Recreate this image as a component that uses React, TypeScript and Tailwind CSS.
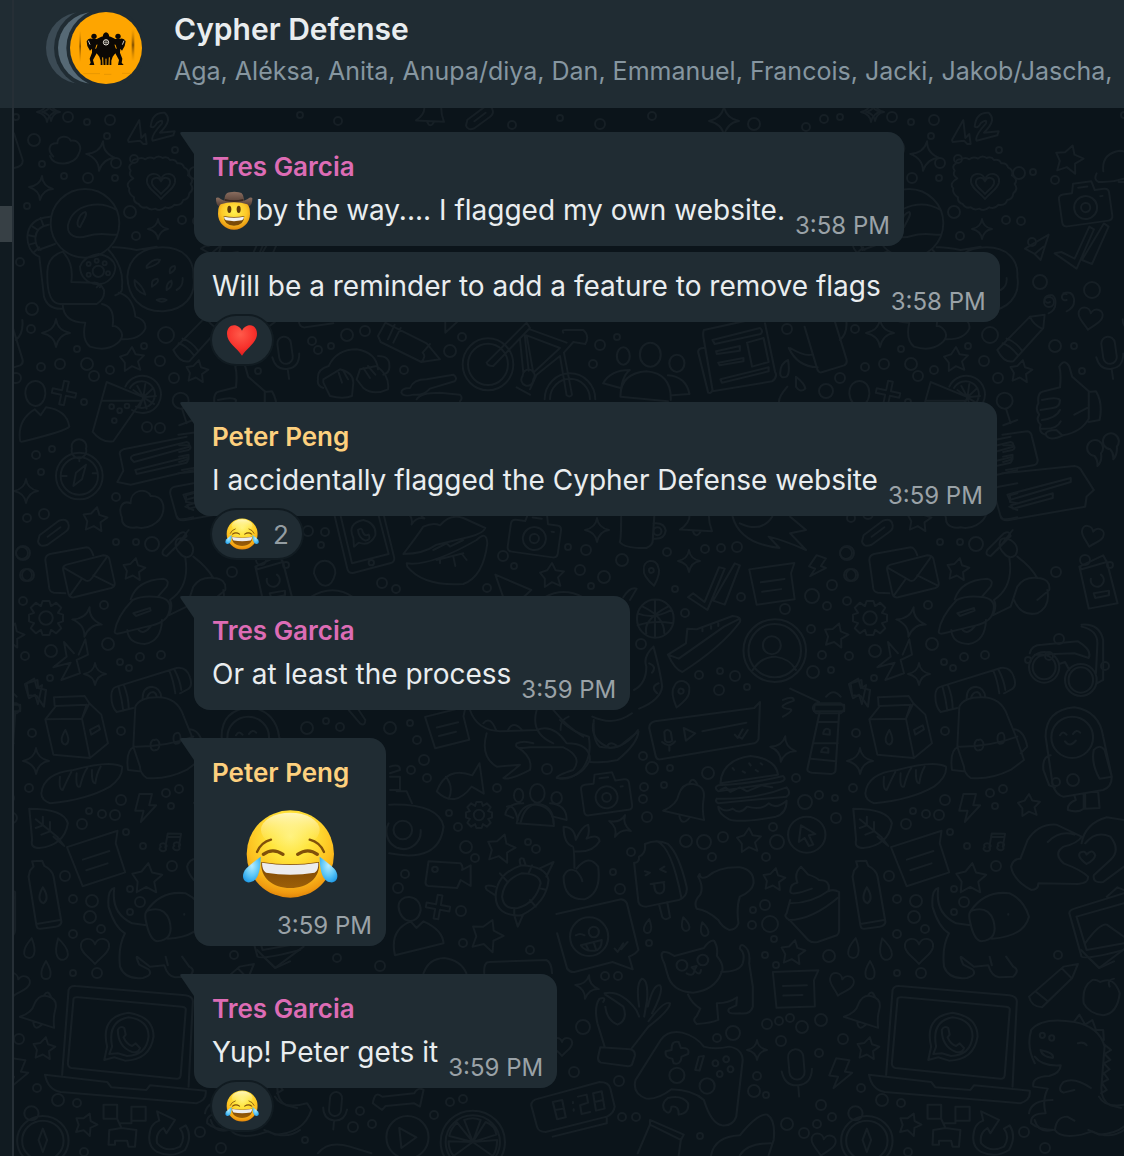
import React, { useId } from "react";

/* ---------- emoji ---------- */

function JoyEmoji({ className }: { className: string }) {
  const id = useId();
  return (
    <svg className={className} viewBox="186 228 288 288" role="img" aria-label="face with tears of joy">
      <defs>
        <radialGradient id={id + "f"} cx="0.5" cy="0.3" r="0.72">
          <stop offset="0" stopColor="#fff27a" />
          <stop offset="0.35" stopColor="#ffe43a" />
          <stop offset="0.7" stopColor="#fdbf1e" />
          <stop offset="0.9" stopColor="#f09a10" />
          <stop offset="1" stopColor="#d97d08" />
        </radialGradient>
        <linearGradient id={id + "h"} x1="0" y1="0" x2="0" y2="1">
          <stop offset="0" stopColor="#fffbe0" stopOpacity="0.8" />
          <stop offset="1" stopColor="#ffef70" stopOpacity="0" />
        </linearGradient>
        <linearGradient id={id + "m"} x1="0" y1="0" x2="0" y2="1">
          <stop offset="0" stopColor="#7a4505" />
          <stop offset="1" stopColor="#9c5f08" />
        </linearGradient>
        <radialGradient id={id + "t"} cx="0.5" cy="0.35" r="0.7">
          <stop offset="0" stopColor="#b6ecff" />
          <stop offset="0.55" stopColor="#5fc8f8" />
          <stop offset="1" stopColor="#1f9be8" />
        </radialGradient>
      </defs>
      <circle cx="331" cy="372" r="131" fill={`url(#${id}f)`} />
      <ellipse cx="331" cy="300" rx="88" ry="52" fill={`url(#${id}h)`} />
      <g fill="none" stroke="#80500a" strokeLinecap="round">
        <path d="M231 366Q243 337 273 329" strokeWidth="7" />
        <path d="M432 366Q420 337 389 329" strokeWidth="7" />
        <path d="M250 373Q278 352 309 373" strokeWidth="10" />
        <path d="M353 373Q384 352 412 373" strokeWidth="10" />
      </g>
      <path d="M244 396Q331 410 417 396C422 444 383 474 331 474C279 474 240 444 244 396Z" fill={`url(#${id}m)`} />
      <path d="M246 398Q331 412 415 398Q416 422 404 428Q331 440 258 428Q246 421 246 398Z" fill="#ececee" />
      <path d="M242 380Q242 452 210 457C188 460 182 434 198 416Q212 402 242 380Z" fill={`url(#${id}t)`} />
      <path d="M419 380Q419 452 451 457C473 460 479 434 463 416Q449 402 419 380Z" fill={`url(#${id}t)`} />
    </svg>
  );
}

function CowboyEmoji({ className }: { className: string }) {
  const id = useId();
  return (
    <svg className={className} viewBox="132 200 120 120" role="img" aria-label="cowboy hat face">
      <defs>
        <radialGradient id={id + "f"} cx="0.5" cy="0.35" r="0.65">
          <stop offset="0" stopColor="#fff04f" />
          <stop offset="0.6" stopColor="#fdc928" />
          <stop offset="1" stopColor="#e28a0c" />
        </radialGradient>
        <linearGradient id={id + "b"} x1="0" y1="0" x2="0" y2="1">
          <stop offset="0" stopColor="#8a6e60" />
          <stop offset="1" stopColor="#4c372e" />
        </linearGradient>
      </defs>
      <path d="M164 243Q160 207 180 207Q193 203 206 207Q226 208 221 243Z" fill={`url(#${id}b)`} />
      <path d="M165 227Q192 235 220 227V237Q192 243 164 237Z" fill="#3b2a22" />
      <path d="M138 224Q144 220 152 227Q165 236 192 236Q220 236 233 227Q242 220 247 224Q248 246 234 251H150Q137 246 138 224Z" fill={`url(#${id}b)`} />
      <path d="M144 271Q144 250 152 243Q170 237 192 237Q214 237 232 243Q240 250 240 271A48 48 0 0 1 144 271Z" fill={`url(#${id}f)`} />
      <ellipse cx="178" cy="258" rx="6" ry="11" fill="#5f3a08" />
      <ellipse cx="206" cy="258" rx="6" ry="11" fill="#5f3a08" />
      <path d="M161 278Q192 284 223 278Q222 307 192 307Q162 307 161 278Z" fill="#7a4a08" />
      <path d="M162 280Q192 286 222 280Q221 290 216 291Q192 296 168 291Q163 290 162 280Z" fill="#f2f2f2" />
    </svg>
  );
}

function HeartEmoji({ className }: { className: string }) {
  const id = useId();
  return (
    <svg className={className} viewBox="165 609 102 102" role="img" aria-label="red heart">
      <defs>
        <radialGradient id={id} cx="0.45" cy="0.3" r="0.75">
          <stop offset="0" stopColor="#ff5a4a" />
          <stop offset="0.6" stopColor="#f8322c" />
          <stop offset="1" stopColor="#d81a1c" />
        </radialGradient>
      </defs>
      <path
        d="M216 632C222 620 232 616 240 616C252 616 261 626 261 641C261 668 230 684 216 707C202 684 171 668 171 641C171 626 180 616 192 616C200 616 210 620 216 632Z"
        fill={`url(#${id})`}
      />
    </svg>
  );
}

/* ---------- group avatar ---------- */

function GroupAvatar() {
  return (
    <svg className="h-[72px] w-24 shrink-0" viewBox="138 36 288 216" role="img" aria-label="Cypher Defense group">
      <defs>
        <linearGradient id="av-shade" x1="0" y1="0" x2="0" y2="1">
          <stop offset="0" stopColor="#c07800" stopOpacity="0" />
          <stop offset="0.5" stopColor="#7c4c00" stopOpacity="0.9" />
          <stop offset="1" stopColor="#c07800" stopOpacity="0" />
        </linearGradient>
      </defs>
      <circle cx="246" cy="144" r="108" fill="#3b4a54" />
      <circle cx="282" cy="144" r="120" fill="#202c33" />
      <circle cx="282" cy="144" r="108" fill="#566975" />
      <circle cx="318" cy="144" r="119" fill="#202c33" />
      <circle cx="318" cy="144" r="108" fill="#fea500" />
      <rect x="238" y="92" width="5" height="94" fill="url(#av-shade)" />
      <rect x="395" y="86" width="8" height="98" fill="url(#av-shade)" />
      <path d="M250 221H300M312 223H334M366 220H392" stroke="#e99700" strokeWidth="3" />
      <g fill="#0b0805">
        <circle cx="282" cy="109" r="8" />
        <circle cx="354" cy="109" r="8" />
        <path d="M308 110Q310 98 318 97Q326 98 328 110L334 122H302Z" />
        <path d="M260 124Q264 114 274 116L290 117L304 110L318 108L332 110L346 117L362 116Q372 114 377 124L374 138L366 152L361 146L360 158L367 176L365 188L371 195H354L357 180L346 160L338 170L334 182L334 195H302L302 182L298 170L290 160L279 180L283 195H268L272 188L269 176L276 158L276 146L270 152L262 138Z" />
      </g>
      <path d="M309 195L308 172M327 195L328 172M318 176V195" stroke="#fea500" strokeWidth="3" />
      <path d="M287 146L291 134M349 146L345 134" stroke="#fea500" strokeWidth="3" />
      <circle cx="318" cy="127" r="8" fill="none" stroke="#e8e4da" strokeWidth="3" />
      <path d="M318 120V134M311 127H325" stroke="#cfcac0" strokeWidth="2" />
      <path d="M265 122L270 134M372 122L367 134" stroke="#cfcac0" strokeWidth="3" />
    </svg>
  );
}

/* ---------- wallpaper ---------- */

const shapes: Record<string, string> = {
  star: "M0 -10L3 -4L10 -3L5 2L7 9L0 6L-6 10L-6 3L-10 -2L-4 -4Z",
  sparkle: "M0 -10Q1 -2 10 0Q2 1 0 10Q-1 2 -10 0Q-1 -2 0 -10Z",
  heart: "M0 -4C2 -10 11 -9 10 -2C9 3 4 5 0 10C-4 5 -9 3 -10 -2C-11 -9 -2 -10 0 -4Z",
  drop: "M0 -10Q6 0 5 5A5 5 0 0 1 -5 5Q-6 0 0 -10Z",
  bolt: "M-4 -10H5L3 -2H8L-3 10L-1 2H-7Z",
  plus: "M-2 -10H2V-2H10V2H2V10H-2V2H-10V-2H-2Z",
  gear: "M-2 -10H2L3 -7L6 -9L9 -6L7 -3L10 -2V2L7 3L9 6L6 9L3 7L2 10H-2L-3 7L-6 9L-9 6L-7 3L-10 2V-2L-7 -3L-9 -6L-6 -9L-3 -7ZM4 0A4 4 0 1 1 -4 0A4 4 0 1 1 4 0",
  bell: "M-10 6Q-4 2 -4 -3Q-3 -9 2 -9Q8 -9 8 -3Q8 2 10 7ZM-2 7Q0 12 3 7M0 -9Q1 -13 4 -9",
  mic: "M-4 -8A4 4 0 0 1 4 -8V0A4 4 0 0 1 -4 0ZM-8 -1Q-7 7 0 7Q7 7 8 -1M0 7V13",
  pin: "M0 10Q-8 0 -6 -5A6 6 0 0 1 6 -5Q8 0 0 10ZM2 -3A2 2 0 1 1 -2 -3A2 2 0 1 1 2 -3",
  clip: "M-9 2L3 -7Q8 -9 9 -5Q10 -2 7 0L-4 8Q-9 10 -10 6ZM-4 3L4 -3",
  camera: "M-9 -5H-5L-4 -9H4L5 -5H9Q11 -5 11 -3V7Q11 9 9 9H-9Q-11 9 -11 7V-3Q-11 -5 -9 -5ZM5 2A5 5 0 1 1 -5 2A5 5 0 1 1 5 2M2 2A2 2 0 1 1 -2 2A2 2 0 1 1 2 2M-2 -7H2M7 -2H8",
  note: "M-9 -7H10L8 -3V8H-8ZM-5 -1H5M-5 3H3",
  fish: "M-10 2Q-4 -9 7 -3L11 -8V6L6 2Q-3 11 -10 2M-5 -4Q-2 1 -5 6",
  music: "M-5 7V-6L7 -8V4M-5 7A3 2 0 1 1 -9 7A3 2 0 1 1 -5 7M7 4A3 2 0 1 1 3 4A3 2 0 1 1 7 4M-5 -3L7 -5",
};

// [shape, x, y, half size, rotation]
const items: [string, number, number, number, number][] = [
  ["sparkle", 101, 156, 15, 8], ["sparkle", 41, 188, 12, 5], ["sparkle", 158, 229, 10, 0], ["sparkle", 56, 333, 14, 0],
  ["star", 132, 359, 12, 0], ["star", 197, 371, 11, 10], ["plus", 64, 393, 12, 12], ["sparkle", 47, 112, 10, 0],
  ["heart", 161, 185, 14, 0], ["heart", 161, 185, 9, 0],
  ["sparkle", 26, 491, 12, 0], ["star", 95, 519, 12, 10], ["clip", 54, 532, 16, 0], ["star", 134, 569, 11, 10],
  ["gear", 46, 618, 17, 0], ["sparkle", 87, 622, 15, 10], ["sparkle", 95, 674, 11, 0], ["bolt", 35, 692, 12, -30],
  ["sparkle", 36, 761, 13, 0], ["bolt", 145, 808, 14, 0], ["star", 205, 805, 11, 0],
  ["music", 172, 841, 11, 10], ["star", 147, 878, 15, 5], ["note", 97, 858, 28, -18],
  ["drop", 30, 948, 10, 10], ["drop", 61, 949, 11, -15], ["drop", 46, 970, 9, 0], ["heart", 95, 950, 14, 0],
  ["bell", 40, 1011, 18, 15], ["star", 44, 1048, 11, 10], ["star", 86, 1124, 11, 20],
  ["sparkle", 724, 121, 15, 0], ["star", 245, 159, 14, 15], ["camera", 261, 203, 23, -8],
  ["heart", 266, 318, 12, 10], ["mic", 286, 357, 17, -8],
  ["sparkle", 597, 530, 12, 0], ["bell", 696, 520, 16, 0],
  ["pin", 652, 574, 12, -10], ["sparkle", 689, 561, 11, 0], ["bolt", 817, 567, 11, 20],
  ["note", 773, 583, 24, -8], ["star", 836, 635, 12, 15], ["pin", 680, 695, 13, 15],
  ["sparkle", 783, 749, 13, 10], ["sparkle", 620, 826, 12, 25], ["bell", 686, 802, 21, 10], ["star", 749, 840, 12, 0],
  ["star", 774, 879, 11, 10], ["star", 793, 952, 12, 10], ["sparkle", 587, 987, 12, 10],
  ["camera", 606, 793, 22, -8], ["drop", 648, 926, 7, 10], ["drop", 685, 924, 7, -15], ["drop", 704, 929, 7, -15],
  ["note", 795, 988, 24, -2], ["heart", 841, 984, 12, 15], ["sparkle", 757, 1050, 10, 0], ["mic", 797, 1072, 19, -5],
  ["bolt", 840, 1074, 15, 8], ["heart", 823, 1144, 12, 10], ["star", 552, 575, 12, 0], ["camera", 535, 534, 23, 8],
  ["gear", 479, 815, 13, 0], ["fish", 458, 784, 22, -8], ["note", 448, 727, 22, -14],
  ["star", 501, 848, 14, 15], ["star", 487, 935, 16, 20], ["plus", 438, 907, 12, 10], ["mic", 335, 1110, 15, 5],
  ["sparkle", 415, 515, 10, 20], ["heart", 268, 536, 11, 15],
  ["heart", 562, 1046, 10, 0], ["clip", 480, 117, 14, 0], ["sparkle", 875, 112, 9, 0], ["bell", 430, 112, 14, 0],
];

// [x, y, radius]
const dots: [number, number, number][] = [
  [68, 117, 5], [87, 122, 3], [110, 120, 5], [34, 140, 6], [107, 136, 3], [42, 164, 3], [116, 163, 5], [134, 159, 4],
  [64, 176, 3], [88, 178, 5], [115, 178, 3], [175, 150, 3], [27, 206, 3], [130, 212, 6], [136, 236, 4], [182, 220, 4],
  [20, 262, 4], [32, 309, 6], [31, 329, 4], [77, 349, 3], [41, 367, 4], [60, 364, 5], [87, 364, 6], [110, 370, 4],
  [94, 376, 5], [144, 346, 3], [166, 335, 8], [160, 361, 5], [174, 378, 5], [84, 402, 3], [147, 427, 5], [160, 428, 5],
  [36, 455, 4], [52, 449, 3], [41, 472, 3], [27, 518, 4], [44, 514, 5], [116, 497, 4], [22, 553, 6], [26, 575, 6],
  [116, 542, 3], [136, 542, 3], [152, 544, 7], [23, 601, 4], [104, 605, 4], [51, 651, 6], [108, 644, 6], [25, 656, 4],
  [120, 662, 3], [140, 657, 4], [161, 655, 4], [129, 668, 3], [50, 678, 3], [121, 731, 4], [32, 733, 4], [29, 788, 4],
  [121, 800, 5], [166, 793, 4], [179, 789, 4], [89, 811, 3], [102, 814, 4], [115, 815, 5], [82, 824, 5], [126, 832, 3],
  [171, 806, 3], [143, 846, 3], [65, 876, 5], [73, 899, 4], [92, 901, 6], [90, 917, 6], [101, 929, 4], [73, 934, 4],
  [140, 902, 5], [130, 912, 3], [130, 889, 3], [172, 866, 5], [97, 973, 5], [73, 973, 3], [37, 1088, 4], [58, 1100, 6],
  [77, 1103, 4], [754, 124, 6], [806, 127, 4], [824, 119, 4], [840, 117, 3], [312, 341, 4], [318, 350, 4], [331, 346, 3],
  [347, 335, 6], [365, 331, 5], [404, 370, 4], [450, 351, 6], [462, 337, 4], [258, 371, 3], [216, 282, 7], [208, 242, 4],
  [197, 221, 4], [195, 173, 6], [209, 172, 3], [231, 180, 4], [268, 290, 8], [231, 346, 6], [250, 346, 3], [225, 302, 5],
  [593, 364, 4], [600, 345, 5], [617, 337, 3], [787, 329, 5], [826, 391, 7], [840, 378, 5], [580, 570, 5], [586, 550, 5],
  [622, 560, 6], [667, 552, 4], [705, 549, 4], [721, 548, 4], [737, 547, 5], [675, 589, 3], [604, 577, 6],
  [591, 586, 3], [847, 553, 7], [832, 585, 5], [812, 596, 7], [741, 597, 4], [852, 575, 6], [827, 606, 4], [785, 609, 5],
  [685, 613, 4], [811, 629, 4], [641, 644, 5], [822, 655, 4], [813, 672, 6], [831, 670, 3], [719, 690, 5], [735, 676, 5],
  [720, 671, 3], [699, 675, 4], [747, 687, 3], [652, 768, 6], [670, 768, 3], [643, 756, 4], [644, 787, 4], [643, 799, 4],
  [647, 817, 5], [664, 785, 3], [708, 773, 6], [796, 778, 4], [805, 802, 7], [819, 795, 4], [835, 798, 3], [836, 818, 5],
  [686, 841, 6], [704, 842, 7], [723, 837, 5], [777, 842, 7], [773, 827, 4], [766, 857, 4], [712, 857, 4], [631, 852, 4],
  [620, 889, 5], [613, 872, 3], [770, 924, 8], [765, 905, 5], [752, 925, 4], [753, 910, 3], [774, 939, 3], [829, 956, 6],
  [765, 955, 3], [776, 965, 3], [649, 943, 3], [583, 1027, 7], [574, 1072, 5], [619, 1081, 5], [605, 976, 4], [618, 976, 4],
  [733, 1033, 7], [717, 1038, 4], [767, 1024, 5], [779, 1021, 4], [790, 1018, 4], [802, 1027, 6], [821, 1020, 6],
  [781, 1041, 5], [819, 1053, 4], [843, 1039, 5], [754, 1091, 6], [757, 1076, 4], [766, 1095, 3], [821, 1105, 5],
  [832, 1117, 4], [787, 1124, 6], [804, 1133, 5], [817, 1124, 4], [622, 1117, 4], [636, 1117, 4], [700, 1136, 3],
  [308, 531, 5], [325, 532, 4], [321, 545, 3], [382, 583, 5], [396, 589, 4], [503, 556, 5], [514, 566, 3], [568, 547, 3],
  [487, 588, 4], [307, 728, 6], [326, 721, 3], [340, 727, 4], [390, 728, 6], [410, 723, 3], [417, 740, 4], [424, 760, 5],
  [411, 770, 4], [427, 778, 4], [497, 788, 4], [547, 769, 5], [449, 813, 3], [458, 827, 4], [466, 847, 6], [475, 858, 4],
  [528, 842, 3], [536, 849, 4], [405, 874, 4], [398, 888, 5], [461, 911, 5], [463, 943, 4], [530, 950, 4], [337, 958, 4],
  [380, 966, 5], [234, 955, 4], [360, 1111, 4], [353, 1127, 5], [372, 1124, 4], [434, 1115, 4], [450, 1102, 4],
  [463, 1099, 4], [305, 1140, 3], [200, 1132, 5], [221, 1148, 5], [84, 1152, 4], [261, 560, 5], [286, 565, 3],
  [232, 572, 5], [235, 639, 5], [225, 656, 4], [204, 660, 3], [281, 666, 4], [249, 780, 6], [232, 782, 4],
  [512, 125, 4], [560, 118, 3], [600, 124, 5], [652, 116, 4], [338, 121, 4], [300, 115, 3],
];

// Larger drawings, grouped by the local grid they are laid out on.
const scenes: { at: string; d: string }[] = [
  {
    at: "translate(0 110) scale(.3333)",
    d: `M42 70L68 150Q70 170 42 174M160 140C140 120 148 98 172 100C172 74 206 76 212 92C236 88 248 112 236 132C226 166 160 172 150 138
    M400 205Q384 196 392 182Q382 168 396 160Q396 146 412 148Q424 140 436 148Q448 138 462 146Q474 134 488 144Q502 138 510 150Q526 146 532 160Q548 158 552 172Q570 180 564 196Q584 208 572 222Q584 238 568 250Q566 268 550 270Q544 288 524 284Q512 298 496 292Q480 306 466 296Q450 302 440 292Q424 296 416 282Q400 276 402 262Q384 250 388 236Q374 220 400 205
    M358 340A103 103 0 1 1 152 340A103 103 0 1 1 358 340M350 300C300 270 220 280 204 345C200 378 230 388 262 378C300 366 330 376 350 374M240 352C224 350 236 310 256 306C264 312 250 330 240 352Z
    M150 320Q84 325 82 382Q84 428 118 440M146 344Q108 350 106 384Q106 410 122 420M98 350L114 360M86 376L106 380M88 404L108 398M100 428L118 412M122 324L130 346M118 440L132 560Q144 600 190 596M165 402L115 420M188 425Q140 440 142 490Q140 580 180 582L290 582Q316 566 312 540Q300 516 280 518L214 516Q222 460 188 425M240 470A52 52 0 1 0 346 470M240 470Q250 440 296 432Q340 440 346 470M312 484A17 17 0 1 1 278 484A17 17 0 1 1 312 484M290 532Q310 510 300 532M188 582Q190 638 256 638Q244 690 270 710Q320 726 352 700Q376 680 360 660Q350 646 338 648Q346 590 306 582M338 412Q360 410 410 420L470 410M326 420Q372 470 366 530Q370 548 346 556M356 548Q400 560 406 620Q440 630 436 656Q420 690 366 688
    M272 462a6 6 0 1 1 -12 0a6 6 0 1 1 12 0M296 452a6 6 0 1 1 -12 0a6 6 0 1 1 12 0M320 460a6 6 0 1 1 -12 0a6 6 0 1 1 12 0M330 490a6 6 0 1 1 -12 0a6 6 0 1 1 12 0M272 494a6 6 0 1 1 -12 0a6 6 0 1 1 12 0
    M580 500C590 560 550 600 490 604C420 606 384 560 382 500C386 440 430 412 488 412C550 412 584 450 580 500ZM440 468Q460 444 480 450Q476 464 440 474ZM510 490Q506 470 524 468Q530 480 510 490ZM456 524Q454 508 472 506Q480 516 456 530ZM500 540Q498 520 514 512Q520 530 500 540ZM404 510Q400 540 436 554Q430 530 404 510ZM470 570Q490 562 500 570Q486 580 470 570ZM530 540Q550 530 548 504
    M76 850C76 800 138 800 136 852C132 900 80 900 76 850M60 990Q52 930 104 898L122 916L138 892Q200 900 208 950Q200 962 72 994Q60 998 60 990
    M320 816L432 862L340 994Q306 1000 278 966ZM304 872H424M376 830A56 56 0 1 1 396 900M390 834A40 40 0 1 1 408 890M430 862L400 840M430 862L412 828M430 862L436 822M430 862L460 834M430 862L468 858M430 862L462 882M430 862L440 896M430 862L418 892
    M342 890a7 7 0 1 1 -14 0a7 7 0 1 1 14 0M366 902a7 7 0 1 1 -14 0a7 7 0 1 1 14 0M388 888a7 7 0 1 1 -14 0a7 7 0 1 1 14 0M350 932a7 7 0 1 1 -14 0a7 7 0 1 1 14 0M566 872a24 24 0 1 1 -48 0a24 24 0 1 1 48 0M546 896L560 940M538 946L580 930
    M384 90L418 30L424 84L436 72L440 102H430L420 92L386 96ZM452 50Q456 6 494 8Q520 30 480 68L524 64L520 76L458 92Q450 80 486 40Q490 24 470 40Q462 56 452 50Z`,
  },
  {
    at: "translate(-124 100) scale(.3333)",
    d: `M975 446L1046 404L1022 480L1004 462ZM1004 462L1030 440M1064 460L1084 456L1124 476L1168 380L1182 388L1130 506ZM1146 480L1212 370L1226 380L1176 492ZM1190 220Q1180 240 1196 246Q1260 250 1330 210Q1340 196 1320 192M1210 214Q1204 160 1260 152Q1316 160 1314 204Q1300 250 1256 246
    M1040 590Q1060 576 1066 600Q1070 630 1046 640M1050 606A10 10 0 1 1 1050 590M1090 580Q1116 570 1122 596Q1126 622 1100 634M1100 600A10 10 0 1 1 1100 582M892 750L990 650L1034 644L1030 684L940 784Q912 790 892 750ZM908 730Q930 736 954 766M990 650Q1000 674 1026 686M920 716Q946 724 966 752`,
  },
  {
    at: "translate(0 440) scale(.3333)",
    d: `M308 108A70 70 0 1 1 168 108A70 70 0 1 1 308 108M294 108A56 56 0 1 1 182 108A56 56 0 1 1 294 108M258 26A22 22 0 1 1 216 26A22 22 0 1 1 258 26M228 98L258 74L246 118L220 138ZM238 52V64M186 108H200M278 100H292
    M360 44Q356 34 370 28L560 -10M360 44L370 92L352 126L392 134L580 90M394 58Q390 50 400 46L560 6Q570 8 568 20L402 66ZM406 90L560 52Q568 58 560 68L410 102Z
    M366 234C352 200 370 180 392 190C390 150 440 140 452 168C490 166 494 200 488 220C480 250 440 270 410 262C396 266 364 262 366 234M580 130L524 140Q506 146 512 166L530 230Q534 244 580 232M580 160L558 166V186L580 190M580 210L556 200
    M196 460L162 458Q150 456 148 446L136 360Q136 346 150 342L260 322Q272 322 280 346M190 392Q186 378 200 374L310 346Q324 346 328 356L344 428Q346 440 334 444L222 472Q210 474 206 464ZM192 384L258 422Q268 426 276 414L320 352M210 466L246 416M340 436L280 406
    M520 330L566 270M490 330Q482 346 500 348L560 288Q556 270 540 280ZM530 300Q540 290 560 300Q590 320 574 346Q556 360 540 340Q520 320 530 300M556 354Q570 440 510 480Q520 500 506 526L560 500M580 350Q620 380 640 414Q600 410 580 440L560 500M640 414Q680 416 676 450L640 480M344 576Q350 530 398 480Q430 464 480 472Q520 480 506 520Q498 550 440 560L360 580Q346 584 344 576ZM392 478Q410 420 490 416Q510 420 500 440L474 470M400 520L450 504L452 512L408 528ZM382 570Q384 610 434 612Q484 604 486 540M416 570Q430 586 452 560M570 480Q590 530 640 520Q680 500 670 450
    M236 644L256 598L264 644L230 660L240 700L184 720L212 668L160 682L200 650L192 606L222 640M350 816Q334 800 334 768Q334 744 350 740L530 684Q560 680 570 712Q580 740 560 750L540 760M350 816L400 804M356 742Q366 780 370 812M372 736Q386 770 386 806M508 692Q520 720 526 760M524 690Q540 720 544 750M428 780Q426 742 456 740Q482 744 484 772M440 776Q446 756 460 756Q470 760 470 772
    M164 798L162 772L254 768L268 790L304 824L324 910L270 954L160 944L136 838L168 798L260 794M136 838L246 836L260 794M246 836L270 954M268 790L246 836M196 870Q214 906 196 914Q174 906 196 870ZM270 870L296 856L300 868L274 884Z
    M400 920L406 800Q420 772 470 772Q530 770 550 826L580 900L600 960L560 990Q500 1020 440 1014Q420 1000 420 980ZM408 920Q500 920 580 890M466 930A10 16 0 1 1 464 900A10 16 0 1 1 466 930M532 910A8 16 0 1 1 530 880A8 16 0 1 1 532 910M404 920Q376 930 384 990L418 994M570 868Q600 870 610 920L590 940
    M124 1060Q130 1000 220 990Q330 960 366 980Q370 1010 330 1040Q260 1080 150 1090Q124 1080 124 1060ZM180 1010Q176 1050 188 1050Q206 1010 214 996M230 1000Q226 1046 240 1040Q250 1000 262 984M276 990Q274 1030 286 1030Q290 1000 302 980`,
  },
  {
    at: "translate(560 320) scale(.3597 .3333)",
    d: `M400 30L570 -10M400 30Q396 40 400 60L424 210Q420 222 412 218L384 96Q384 84 400 84M424 214L590 184Q606 170 598 156L570 10M424 60L556 24Q566 32 558 42L430 72ZM434 94L500 78V92L436 102ZM440 128L510 114V124L444 136ZM520 68L566 54L580 126L534 140ZM446 178L580 142V154L450 188Z
    M680 20L716 150Q720 160 730 156L790 136Q800 130 796 116L760 -10M640 84Q680 110 700 104M636 84Q660 140 716 142M778 60Q800 40 796 0
    M120 190Q140 150 194 150Q170 170 168 230L300 244M120 190L168 204M168 226Q170 160 240 154Q310 160 308 240M300 166Q350 170 360 222L312 226M194 108A18 26 0 1 1 158 108A18 26 0 1 1 194 108M280 104A29 36 0 1 1 222 104A29 36 0 1 1 280 104M346 130A21 26 0 1 1 304 130A21 26 0 1 1 346 130
    M612 160Q612 130 634 120Q640 160 630 170Q612 176 612 160M656 170Q680 190 682 206Q668 220 656 200ZM632 200Q600 240 612 256
    M1330 250Q1326 216 1346 214L1390 202Q1394 160 1388 140Q1402 114 1416 140L1424 170L1470 214L1470 296Q1450 336 1398 346Q1360 366 1350 344Q1330 340 1336 314Q1322 300 1332 284Q1320 266 1330 250ZM1340 240Q1380 230 1390 240Q1390 262 1370 264L1336 270M1340 300Q1380 294 1390 270M1340 326Q1380 330 1392 304M1350 344Q1350 330 1380 330L1396 346M1430 284L1466 264M1470 216L1490 214Q1510 250 1500 300L1470 306
    M1230 344L1300 334Q1310 336 1312 350L1328 420Q1328 434 1316 436L1240 450M1232 376H1260Q1268 384 1258 390L1232 396M1232 410L1258 404V418L1232 426M1486 408A22 24 0 1 1 1504 400Q1508 424 1494 438Q1496 420 1486 408M1530 388A22 24 0 1 1 1548 380Q1550 404 1538 418Q1540 400 1530 388
    M1230 460L1430 438Q1446 440 1452 456L1484 510L1464 530L1460 560L1250 600Q1230 604 1226 590M1244 524L1420 474V486L1250 540ZM1254 556L1370 520V534L1260 566Z
    M1444 740L1510 706L1520 726L1450 748ZM1444 740L1470 866L1550 850L1520 724M1476 776A18 20 0 1 0 1504 764M1484 820L1526 812V826L1488 834Z
    M170 590Q170 660 166 666Q180 686 240 684Q260 676 258 656L262 590M258 656Q290 660 294 632Q290 606 260 610M282 634A11 12 0 1 1 260 634A11 12 0 1 1 282 634
    M480 590Q500 670 610 684L580 650Q620 660 684 690L640 640L684 630L640 590M500 610Q560 640 590 590
    M356 832L370 820L402 846L442 742L458 746L410 870ZM426 842L486 730L500 736L458 854Z
    M316 896A50 56 0 1 1 214 896A50 56 0 1 1 316 896M264 842V952M216 880Q260 900 310 870M230 860Q290 890 290 940M300 860Q230 900 240 940M216 916Q260 900 314 910
    M300 1004L350 970L354 926L380 928L480 888Q506 890 500 906Q450 980 340 1056Q320 1050 300 1004ZM300 1004L330 1016L456 920L500 896M396 926V934M420 918V926M440 910V918
    M684 992A87 94 0 1 1 510 992A87 94 0 1 1 684 992M670 992A73 80 0 1 1 524 992A73 80 0 1 1 670 992M614 976A25 27 0 1 1 564 976A25 27 0 1 1 614 976M536 1050Q560 1010 598 1010Q640 1016 656 1050
    M1388 1042A42 46 0 1 1 1304 1042A42 46 0 1 1 1388 1042M1378 1042A32 36 0 1 1 1314 1042A32 36 0 1 1 1378 1042M1492 1080A44 48 0 1 1 1404 1080A44 48 0 1 1 1492 1080M1482 1080A34 38 0 1 1 1414 1080A34 38 0 1 1 1482 1080M1306 1000Q1310 974 1340 974L1440 964Q1480 990 1470 1014L1430 1000L1320 1004M1388 1032L1404 1026L1416 1050M1450 914Q1500 910 1510 960V1080L1490 1092M1450 920Q1494 930 1494 970L1490 1060
    M260 980Q280 1060 284 1100Q280 1140 220 1166M260 980Q230 1010 240 1040Q240 1090 206 1110M248 1030Q270 1040 256 1058M274 1090Q250 1100 270 1120
    M640 1106L720 1146M620 1140Q650 1126 650 1142Q600 1160 630 1166Q660 1166 620 1190M740 1130Q760 1104 780 1130M712 1150H780Q800 1164 780 1180H712Q694 1164 712 1150M808 1090L838 1080L840 1104L862 1110L856 1160L836 1128L812 1126Z`,
  },
  {
    at: "translate(560 700) scale(.3597 .3333)",
    d: `M264 64L540 24L556 6L552 116Q550 126 540 130L280 178Q268 180 266 168L248 84Q248 68 264 64ZM290 96Q298 82 308 96L312 122Q300 132 292 122ZM284 126Q304 146 320 124M304 138V152M344 84L376 100L350 122ZM396 94L518 68M486 104L494 114L508 88M500 112L506 116L522 90
    M708 14H790V34H706ZM722 36L688 206Q686 216 700 218L754 222Q766 220 766 210L776 38M716 66H774M706 130H772M698 176L768 184M732 98Q736 80 750 90V104L732 102ZM726 156Q730 136 746 146V158Z
    M446 250Q450 180 530 168Q600 176 606 224ZM440 256Q540 250 620 228Q632 240 612 246L440 274Q426 262 440 256M446 270L460 262L474 276L500 262L520 274L560 256L590 262M436 296Q540 300 630 262Q644 280 630 290L440 310Q430 304 436 296M440 320Q460 340 480 326Q500 346 520 320Q560 332 580 310Q600 330 630 302Q630 340 600 350Q500 370 470 358Q440 340 440 320M480 204L484 210M526 190L530 196M508 214L514 218M544 210L550 214M558 190L562 194
    M738 404A52 54 0 1 1 634 404A52 54 0 1 1 738 404M670 376L710 402L692 406L704 434L692 438L680 414L664 426Z
    M206 488Q220 490 220 470Q240 460 236 432Q270 416 300 432Q330 460 352 560Q356 590 330 600L240 620Q222 620 218 606ZM270 424Q310 440 338 596M236 514L250 518L238 526M290 500L278 508L294 516M252 552L290 546M262 552Q262 584 280 580Q294 576 288 548M276 616L284 650Q292 664 306 652L298 606
    M388 522Q390 540 410 530Q440 500 500 502Q540 510 538 550Q534 574 500 590Q490 620 496 670Q490 690 470 690Q450 680 440 660Q410 630 380 626Q370 606 390 584Q400 560 384 530Z
    M640 600L630 640Q620 650 640 662L690 720Q700 730 716 726L770 706Q776 700 776 690V576Q760 566 746 574Q754 540 720 540Q710 530 690 524L670 500Q650 520 660 548Q640 550 640 574M640 574Q640 590 700 566M640 610Q700 610 750 570M636 660Q700 660 776 590
    M40 504Q40 440 36 440Q10 430 10 380Q40 380 44 420Q60 380 78 374Q84 400 74 416Q108 400 110 424Q90 460 40 454M46 514Q60 530 62 544M46 506Q80 460 106 500Q116 580 68 598Q10 600 10 530Q20 500 46 514
    M-10 642L170 598Q182 600 186 610L218 750Q210 762 192 770L202 808L146 786L40 816Q28 818 20 806L-8 700M134 710A53 58 0 1 1 28 710A53 58 0 1 1 134 710M44 706Q56 698 68 706M108 696A14 16 0 1 1 80 696A14 16 0 1 1 108 696M58 736L116 720Q116 750 96 752Q70 756 58 736M72 734L80 752M94 728L100 748M152 746L160 756L176 730M170 748L188 726
    M290 790Q276 760 288 756Q300 754 318 768L400 744Q416 720 428 722Q440 740 436 768Q460 800 448 820Q430 870 370 878Q310 876 298 820ZM354 796A15 16 0 1 1 324 796A15 16 0 1 1 354 796M412 780A15 16 0 1 1 382 780A15 16 0 1 1 412 780M366 802L380 798L374 810ZM352 820Q370 832 374 812Q390 830 392 810M448 816Q500 816 508 790Q516 760 500 746Q500 730 512 738Q530 750 526 790L536 860V920Q530 944 500 940Q460 944 470 926L490 916L492 892Q470 910 436 910L440 960Q420 970 380 972Q366 960 380 948L390 926Q366 910 356 884
    M120 906Q130 890 110 896Q94 920 104 970L124 1040M124 880Q170 870 212 930L220 950M126 884Q150 900 176 920Q190 960 160 974Q130 960 126 920M220 920Q210 850 228 836Q246 840 242 900L234 950M244 920Q260 850 278 856Q290 870 256 940M246 964Q290 900 306 910Q306 930 246 980L200 1044M112 1042L196 1048Q210 1052 208 1068L200 1094Q196 1100 184 1098L114 1088Q104 1084 106 1070Z
    M210 1140L280 1020Q300 990 340 998Q380 1010 400 1040Q430 1050 470 1040Q506 1046 508 1080L490 1250Q480 1280 450 1276Q420 1270 400 1200Q370 1170 310 1168Q270 1200 240 1196Q200 1180 210 1140ZM310 1050Q310 1020 330 1026L336 1044Q362 1042 356 1062L338 1070Q336 1096 316 1090L312 1076Q290 1074 294 1054ZM346 1126A21 23 0 1 1 304 1126A21 23 0 1 1 346 1126M430 1158A21 23 0 1 1 388 1158A21 23 0 1 1 430 1158M386 1070L400 1068L388 1112L376 1110ZM440 1090A8 9 0 1 1 424 1090A8 9 0 1 1 440 1090M470 1078A8 9 0 1 1 454 1078A8 9 0 1 1 470 1078M452 1122A8 9 0 1 1 436 1122A8 9 0 1 1 452 1122M482 1108A8 9 0 1 1 466 1108A8 9 0 1 1 482 1108
    M-60 1196L110 1146Q136 1146 140 1166L152 1220Q150 1240 130 1250L-40 1296Q-60 1296 -64 1280L-80 1216Q-80 1200 -60 1196M-20 1310L130 1270V1254M50 1190L74 1184L78 1208L56 1216L60 1242L84 1236M92 1180L116 1174L124 1226L100 1232ZM96 1206L120 1200M36 1206V1210M38 1228V1232M-20 1206L6 1200L16 1252L-8 1258ZM-14 1230L10 1226M290 1230Q280 1210 300 1194Q340 1184 356 1210Q360 1240 330 1244Q330 1216 310 1220Q306 1250 290 1230M250 1260L344 1304L336 1320L250 1274ZM250 1274L216 1360M336 1320L330 1366M420 1366Q430 1310 500 1306Q550 1240 576 1244Q600 1260 594 1320L580 1366M500 1366Q520 1330 586 1330
    M0 60Q40 100 80 110Q90 170 60 210Q30 240 0 236M94 60Q90 120 110 140Q160 150 176 130L218 94Q216 130 160 180Q120 190 84 186M90 50Q150 80 200 40M130 140Q140 120 160 140
    M1350 110Q1350 30 1430 22Q1500 34 1510 110L1534 230Q1534 260 1510 270L1400 290Q1380 286 1370 256L1350 110M1482 112A58 62 0 1 1 1366 112A58 62 0 1 1 1482 112M1390 106Q1398 90 1408 104M1426 102Q1436 86 1446 98M1404 124Q1418 144 1434 122M1364 166Q1340 170 1344 210L1360 256L1376 262M1484 150Q1500 130 1514 150L1534 230L1500 236Q1476 190 1484 150M1430 286L1434 300Q1410 310 1412 330Q1440 340 1456 326V282M1460 284V326L1500 324L1496 274
    M1280 476L1300 420Q1330 370 1380 374L1450 410Q1440 430 1400 440Q1370 460 1400 490Q1450 510 1468 530Q1470 550 1440 552L1330 550Q1330 570 1310 570Q1260 540 1254 500Q1260 476 1280 476M1356 426Q1390 390 1430 404M1450 430Q1460 370 1520 352L1568 360M1460 430Q1490 390 1530 410Q1560 450 1530 480L1484 526Q1480 550 1510 546L1568 500M1464 492Q1436 470 1446 458Q1460 450 1464 464Q1480 444 1488 466Q1486 480 1464 492
    M1416 640Q1416 630 1430 626L1568 580M1416 640L1450 770Q1460 780 1568 750M1436 650L1568 610M1436 650L1464 750L1568 730M1460 730Q1500 670 1520 674L1568 710M1470 774L1500 804L1540 784M1520 590L1550 562L1568 570
    M1304 890L1400 800L1440 792L1424 834L1340 922Q1310 920 1304 890ZM1324 876L1356 904M1396 806L1420 832M1502 846Q1540 826 1556 880Q1550 940 1510 946Q1470 940 1456 910Q1450 860 1480 840Q1490 838 1502 846M1528 860Q1520 840 1540 836
    M1320 1090Q1296 1040 1310 990Q1340 950 1430 966Q1500 980 1514 1040L1506 1150Q1500 1200 1530 1216L1560 1224M1320 1070Q1340 1100 1392 1096Q1390 1120 1360 1128Q1310 1130 1316 1160L1356 1166Q1340 1200 1350 1240M1430 964L1444 944L1460 974L1480 960L1490 990L1510 990L1512 1020M1514 1034L1532 1050L1514 1062L1530 1080L1512 1090L1528 1108L1512 1120L1524 1138L1506 1148L1520 1170L1504 1180M1336 1050Q1340 1070 1370 1074Q1376 1060 1336 1050M1348 1006A7 8 0 1 1 1334 1006A7 8 0 1 1 1348 1006M1374 1014A7 8 0 1 1 1360 1014A7 8 0 1 1 1374 1014M1440 1030Q1456 1024 1464 1036M1476 1164Q1430 1130 1400 1146Q1380 1170 1400 1178L1430 1170M1350 1240Q1306 1240 1310 1270Q1330 1290 1376 1290Q1380 1250 1410 1250L1430 1262M1376 1290Q1390 1316 1450 1304L1480 1294Q1530 1320 1568 1290`,
  },
  {
    at: "translate(0 800) scale(.3571 .3333)",
    d: `M82 26Q180 26 190 70Q180 136 110 144Q84 144 90 120ZM100 58L160 110L180 138M120 50V76L100 84M140 66V94L116 104M150 110L176 134
    M84 212L94 200L90 184L118 182L124 198Q146 210 150 230L172 366Q170 378 156 380L114 386Q104 388 102 376L80 230ZM102 372L168 360M120 262Q140 296 122 310Q100 300 120 262
    M320 264Q300 270 304 320Q320 380 350 400Q330 440 336 500Q350 540 400 534Q430 524 416 508L390 494Q380 470 384 470L420 500L460 496Q470 530 490 532L530 530Q550 510 530 500L510 470M320 264Q310 340 370 370L410 376M410 370Q400 330 420 330Q460 320 474 360Q490 420 440 424Q420 420 410 370M410 334Q450 270 520 280Q560 300 574 350Q560 410 470 416M470 496L464 470M516 342V344
    M174 824L192 570Q196 556 212 558L520 586Q540 590 540 604L528 860M190 790L206 596Q208 590 220 592L510 620Q522 622 520 632L506 826Q504 838 494 836L200 804Q190 802 190 790ZM126 824L300 846L312 862L410 870L420 856L576 872Q580 900 550 910L170 876Q134 870 126 824M292 780L300 740Q280 650 360 638Q430 650 430 710Q420 780 350 782L320 772ZM306 762L314 740Q300 664 360 652Q416 660 416 710Q410 766 356 768L330 760ZM330 690Q336 676 348 684L352 704L346 712Q354 732 370 738L380 730L392 744Q388 760 370 756Q330 740 330 690
    M192 1022A72 74 0 1 1 48 1022A72 74 0 1 1 192 1022M178 1022A58 60 0 1 1 62 1022A58 60 0 1 1 178 1022M108 940A20 21 0 1 1 68 940A20 21 0 1 1 108 940M120 986L132 1020L120 1056L108 1020Z
    M290 914H328V956H290ZM368 920H408V962H368ZM328 956L334 970H368V962M334 970L340 984L306 990L304 1034H322V1022H356L360 1040H378L382 990L340 984
    M418 1010Q420 970 446 962L440 934L490 960L466 1000L458 984Q434 1000 440 1030Q466 1060 504 1040Q522 1010 504 986L520 976Q540 1010 518 1050Q480 1076 440 1056Q416 1040 418 1010
    M1090 160Q1230 190 1242 80Q1230 10 1090 14M1178 90A48 52 0 1 1 1088 70M1178 90A48 52 0 0 1 1088 120M1154 90A26 28 0 1 1 1102 90A26 28 0 1 1 1154 90
    M1200 184L1290 190Q1298 200 1294 210L1318 196V258L1290 240L1280 264L1200 258Q1190 256 1192 244ZM1226 208A8 8 0 1 1 1210 208A8 8 0 1 1 1226 208
    M1388 290Q1390 220 1460 196Q1530 200 1536 240Q1530 310 1460 346Q1390 350 1388 290M1406 290Q1410 240 1460 220Q1510 220 1514 250Q1500 310 1450 324Q1410 330 1406 290M1458 196Q1450 170 1466 176L1472 196M1386 260Q1350 250 1364 270L1384 284M1510 206L1550 186L1530 230M1440 346L1450 380L1464 346M1400 220L1420 244M1490 196L1480 220M1530 270L1510 264M1500 320L1484 300M1440 346V324
    M1116 320C1116 280 1178 280 1178 330C1170 380 1120 370 1116 320M1106 466Q1090 390 1150 364L1166 384L1186 364Q1240 390 1242 430Z
    M1186 520Q1200 476 1244 474Q1290 480 1306 520M1356 520Q1354 486 1370 486L1530 480Q1544 486 1546 520
    M574 940Q580 900 640 900M770 890Q790 930 860 910L872 930Q850 1000 770 1004L740 990M590 960Q600 1000 640 990
    M1200 1012A59 64 0 1 1 1082 1012A59 64 0 1 1 1200 1012M1118 984L1166 1012L1124 1044Z
    M1414 1026A90 94 0 1 1 1234 1026A90 94 0 1 1 1414 1026M1400 1026A76 80 0 1 1 1248 1026A76 80 0 1 1 1400 1026M1324 1026L1300 960Q1324 950 1346 960ZM1324 1026L1360 966Q1386 976 1390 1004ZM1324 1026L1280 968Q1262 986 1258 1008ZM1324 1026L1392 1020Q1392 1050 1380 1068ZM1324 1026L1256 1024Q1256 1050 1270 1068Z
    M1044 910Q1050 870 1070 890L1160 880Q1170 860 1186 870L1176 920L1160 910L1080 918L1070 930Z
    M1420 20Q1440 10 1450 60M1458 68Q1470 10 1510 12Q1550 20 1550 70M720 450L770 504L850 440
    M890 1060Q920 1020 980 1040L1040 1060`,
  },
  {
    at: "translate(260 316) scale(.3333)",
    d: `M354 60L376 20L500 82L540 130L484 138L362 78ZM384 70L404 26M400 80L422 36M484 138Q500 120 488 110L510 84
    M760 145A76 78 0 1 1 608 145A76 78 0 1 1 760 145M744 145A60 62 0 1 1 624 145A60 62 0 1 1 744 145M680 140L800 20L810 36L700 150Q684 152 680 140M800 58L900 96L820 170ZM810 40L920 80M780 70L790 170M794 56L806 164M910 50Q904 40 920 42H970Q990 60 976 84L940 78L912 110L936 236Q930 246 920 238L900 120L830 176L810 220M788 180A18 18 0 1 1 820 190A18 18 0 1 1 788 180M770 214L810 236M1006 250A76 78 0 1 0 854 250M990 250A60 62 0 1 0 870 250
    M206 150Q230 100 290 100Q350 110 354 160M206 150Q170 160 174 190Q170 210 190 216M354 120Q390 120 388 150Q390 170 370 176M190 190L240 160Q280 170 280 200L276 240Q250 250 210 240L190 200ZM300 160L350 150Q390 180 384 220Q340 240 310 216L290 190ZM236 170L246 200M250 164L264 190M310 156L330 186M324 150L346 176
    M424 230Q424 216 450 216Q460 190 500 190L580 176Q594 186 584 196L510 218Q490 240 460 236Q430 244 424 230M470 250Q480 230 540 230L600 236Q610 246 600 256
    M116 10Q116 36 136 34L220 22M556 -10V50L600 10`,
  },
  {
    at: "translate(290 510) scale(.3333)",
    d: `M132 10L172 176Q176 192 192 188L300 160Q316 156 312 140L280 10M150 10L186 160L296 132L264 10M252 158A8 8 0 1 1 236 158A8 8 0 1 1 252 158M192 110L190 84Q170 40 220 30Q260 40 256 76Q240 110 206 98ZM204 60Q216 50 218 66Q224 80 236 74Q244 90 226 92Q206 84 204 60
    M340 132Q380 80 400 50Q430 36 450 46Q480 10 520 24L586 54Q580 70 540 80L440 104Q400 132 340 132M350 160Q420 170 560 90Q590 60 592 100Q580 200 520 222Q400 230 352 170ZM430 120L470 100L480 110L520 90M440 150L520 130M450 146V160M490 140L496 168M516 132L530 150
    M72 190C72 140 136 140 136 190C124 240 90 240 72 190M616 194L724 240L700 262M616 194L640 262M764 262Q820 230 880 262M60 262Q130 220 190 262M1000 262Q1020 230 1040 236L1020 270
    M540 600Q560 660 630 664L740 660Q790 640 830 700Q900 700 900 750Q870 810 800 804Q800 796 850 780Q880 740 820 712H720Q670 720 680 700Q700 690 730 700M740 600Q720 670 790 700M590 670Q570 740 620 770L690 764Q660 790 640 804Q660 812 720 780Q730 740 680 710M910 640Q900 690 960 714Q1010 710 1044 660M790 600Q830 650 880 680M580 640Q600 616 618 660M654 660Q670 630 696 660M812 660Q810 630 836 620
    M680 940Q690 880 740 884Q790 890 792 948ZM670 924L646 914Q650 880 700 880M790 920L830 930Q830 884 780 880M764 850A22 28 0 1 1 720 850A22 28 0 1 1 764 850M700 856A14 20 0 1 1 672 856A14 20 0 1 1 700 856M816 864A16 18 0 1 1 784 864A16 18 0 1 1 816 864
    M300 770Q330 760 330 780L300 790M300 800H330V840H300M320 844H350L366 880M176 600L210 640Q226 650 226 630L206 600`,
  },
];

function Tile() {
  return (
    <g id="doodle-tile">
      {scenes.map((s) => (
        <path key={s.at} d={s.d} transform={s.at} strokeWidth="6" />
      ))}
      {items.map(([kind, x, y, r, rot], i) => (
        <path
          key={i}
          d={shapes[kind]}
          transform={`translate(${x} ${y}) rotate(${rot}) scale(${r / 10})`}
          strokeWidth={20 / r}
        />
      ))}
      {dots.map(([x, y, r], i) => (
        <circle key={i} cx={x} cy={y} r={r} strokeWidth="2" />
      ))}
    </g>
  );
}

function Wallpaper() {
  return (
    <svg
      className="pointer-events-none absolute inset-0 size-full"
      fill="none"
      stroke="#161f25"
      strokeLinejoin="round"
      strokeLinecap="round"
      aria-hidden="true"
    >
      <g transform="translate(-14 -108)">
        <Tile />
        <use href="#doodle-tile" x="-824" />
        <use href="#doodle-tile" x="824" />
      </g>
    </svg>
  );
}

/* ---------- messages ---------- */

type Reaction = { emoji: "heart" | "joy"; count?: number };
type Message = {
  author?: string;
  color?: string;
  text?: string;
  cowboy?: boolean;
  bigEmoji?: boolean;
  time: string;
  reaction?: Reaction;
};

const pink = "text-[#dd6cb5]";
const yellow = "text-[#fdd07e]";

const messages: Message[] = [
  { author: "Tres Garcia", color: pink, cowboy: true, text: "by the way.... I flagged my own website.", time: "3:58 PM" },
  { text: "Will be a reminder to add a feature to remove flags", time: "3:58 PM", reaction: { emoji: "heart" } },
  {
    author: "Peter Peng",
    color: yellow,
    text: "I accidentally flagged the Cypher Defense website",
    time: "3:59 PM",
    reaction: { emoji: "joy", count: 2 },
  },
  { author: "Tres Garcia", color: pink, text: "Or at least the process", time: "3:59 PM" },
  { author: "Peter Peng", color: yellow, bigEmoji: true, time: "3:59 PM" },
  { author: "Tres Garcia", color: pink, text: "Yup! Peter gets it", time: "3:59 PM", reaction: { emoji: "joy" } },
];

function Time({ value }: { value: string }) {
  return <time className="shrink-0 pr-3.5 pb-2 text-[24px] leading-6 text-[#9aa2a7]">{value}</time>;
}

function ReactionPill({ reaction }: { reaction: Reaction }) {
  return (
    <button
      type="button"
      className="relative -mt-1.5 ml-8 flex h-12 items-center gap-3.5 rounded-full bg-[#202c33] px-[13px] text-[26px] text-[#949da2] ring-2 ring-[#111b21]"
    >
      {reaction.emoji === "heart" ? (
        <HeartEmoji className="size-[34px]" />
      ) : (
        <JoyEmoji className="size-[34px]" />
      )}
      {reaction.count !== undefined && <span>{reaction.count}</span>}
    </button>
  );
}

function Bubble({ m }: { m: Message }) {
  const first = m.author !== undefined;
  return (
    <li className={`flex flex-col items-start ${first ? "pt-7 first:pt-0" : "pt-1.5"} ${m.reaction ? "pb-2.5" : ""}`}>
      <article
        className={`relative ml-3.5 flex flex-col bg-[#202c33] pt-[15px] ${first ? "rounded-2xl rounded-tl-none" : "rounded-2xl"}`}
      >
        {first && (
          <svg className="absolute top-0 -left-3.5 h-[22px] w-3.5" viewBox="0 0 14 22" aria-hidden="true">
            <path d="M14 0H2Q-1 0 1 3L14 22Z" fill="#202c33" />
          </svg>
        )}
        {m.author && <h2 className={`mb-1 px-[18px] text-[26px] leading-10 font-semibold ${m.color}`}>{m.author}</h2>}
        {m.bigEmoji ? (
          <>
            <JoyEmoji className="mx-12 mt-[9px] mb-3 size-24" />
            <div className="flex justify-end">
              <Time value={m.time} />
            </div>
          </>
        ) : (
          <div className="flex items-end gap-2.5 pl-[18px]">
            <p className="flex items-center pb-[17px] text-[28px] leading-[38px] text-[#e9edef]">
              {m.cowboy && <CowboyEmoji className="-my-1 mr-0.5 ml-0.5 size-10" />}
              {m.text}
            </p>
            <Time value={m.time} />
          </div>
        )}
      </article>
      {m.reaction && <ReactionPill reaction={m.reaction} />}
    </li>
  );
}

export default function App() {
  return (
    <div className="flex min-h-screen bg-[#0b141a] font-['Inter',sans-serif]">
      <aside className="flex w-3.5 shrink-0 flex-col border-r-2 border-[#262f36] bg-[#111b21]">
        <div className="h-[108px] bg-[#202c33]" />
        <div className="mt-[98px] h-9 bg-[#374045]" />
      </aside>
      <div className="flex min-w-0 flex-1 flex-col">
        <header className="flex h-[108px] items-start gap-8 overflow-hidden bg-[#202c33] pt-3 pl-8">
          <GroupAvatar />
          <div className="min-w-0 flex-1">
            <h1 className="text-[30px] leading-[34px] font-semibold text-[#e9edef]">Cypher Defense</h1>
            <p className="mt-[7px] overflow-hidden text-[25px] leading-9 whitespace-nowrap text-[#8696a0]">
              Aga, Aléksa, Anita, Anupa/diya, Dan, Emmanuel, Francois, Jacki, Jakob/Jascha,
            </p>
          </div>
        </header>
        <main className="relative flex-1 overflow-hidden">
          <Wallpaper />
          <ol className="relative pt-6 pb-4 pl-[166px]">
            {messages.map((m, i) => (
              <Bubble key={i} m={m} />
            ))}
          </ol>
        </main>
      </div>
    </div>
  );
}
